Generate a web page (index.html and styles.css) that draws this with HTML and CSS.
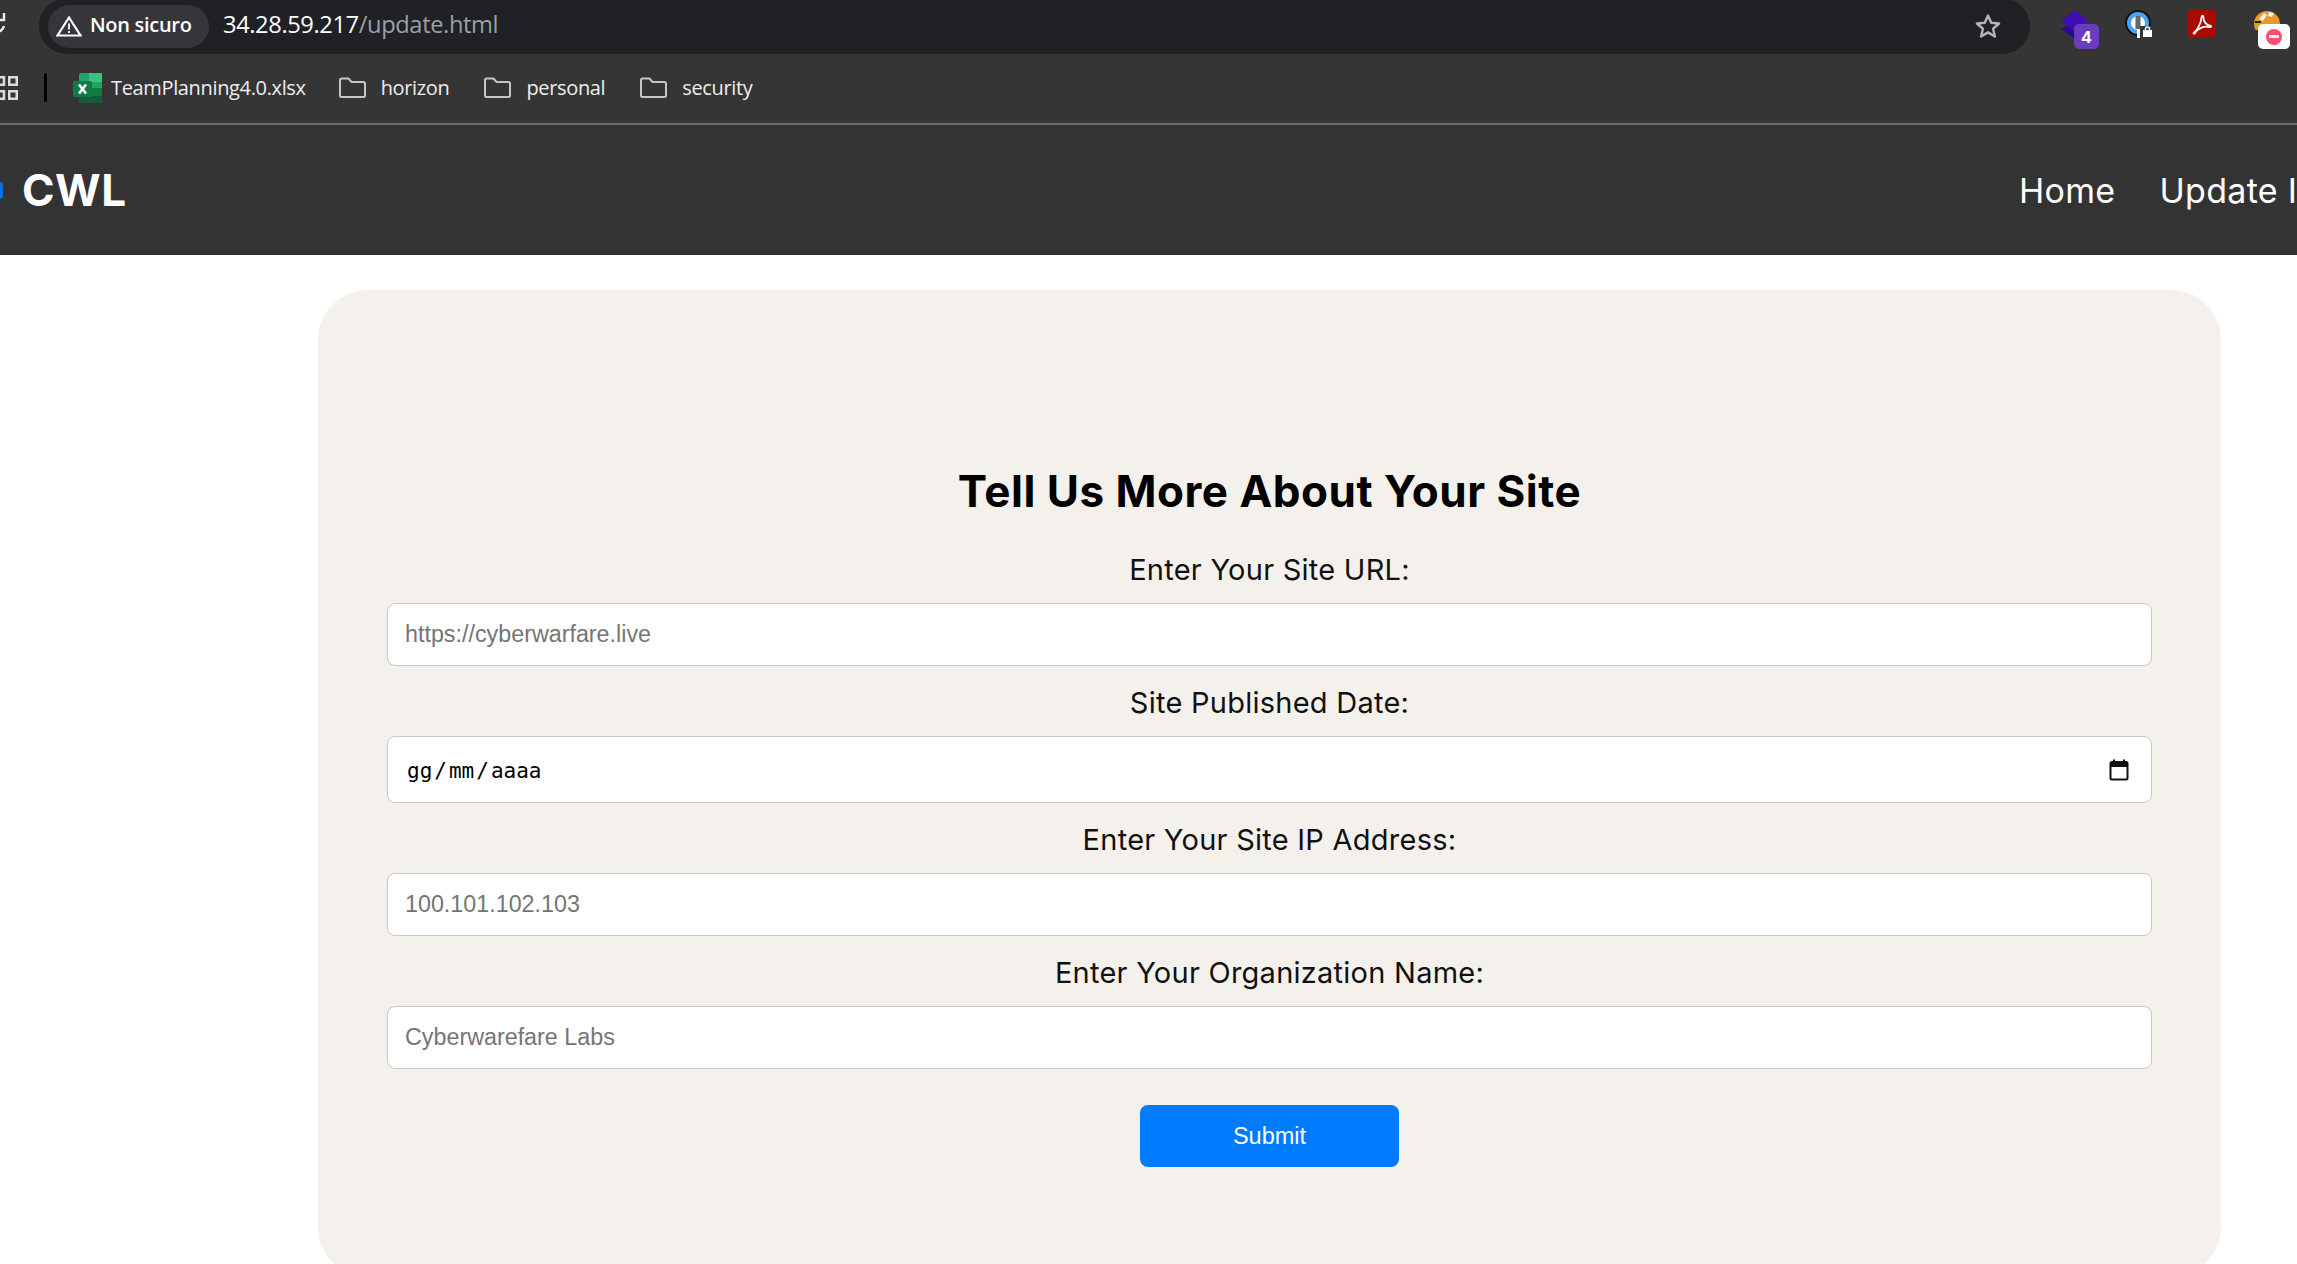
FILE: index.html
```html
<!DOCTYPE html>
<html lang="it">
<head>
    <meta charset="UTF-8">
    <meta name="viewport" content="width=device-width, initial-scale=1.0">
    <title>CWL - Update</title>
    <link rel="stylesheet" href="styles.css">
</head>
<body>
    <div class="toolbar">
        <svg class="reload" width="6" height="22" viewBox="0 0 6 22"><path d="M-3 20a8.500 8.500 0 0 0 7-6" fill="none" stroke="#e8eaed" stroke-width="2.500"/><path d="M4 1v7h-7" fill="none" stroke="#e8eaed" stroke-width="2.500"/></svg>
        <div class="omnibox">
            <div class="chip">
                <svg width="26" height="22" viewBox="0 0 26 22"><path d="M13 2.500 24.500 20.500h-23z" fill="none" stroke="#fff" stroke-width="2.200"/><path d="M13 8.500v6M13 16v2" stroke="#fff" stroke-width="1.800"/></svg>
                <span class="chip-text">Non sicuro</span>
            </div>
            <div class="url">34.28.59.217<span class="url-path">/update.html</span></div>
            <svg class="star" width="28" height="28" viewBox="0 0 28 28"><path d="m14 3.500 3.200 7.300 7.900.7-6 5.200 1.800 7.800-6.900-4.100-6.900 4.100 1.800-7.800-6-5.200 7.900-.7z" fill="none" stroke="#b4b5b8" stroke-width="2.400" stroke-linejoin="round"/></svg>
        </div>
        <div class="extensions">
            <div class="ext ext-stack">
                <svg width="30" height="30" viewBox="0 0 30 30"><path d="M1 19 15 12l14 7-14 10z" fill="#2a0a8c"/><path d="M1 11 15 0l14 11-14 11z" fill="#3f0fb0"/></svg>
                <span class="badge badge-count">4</span>
            </div>
            <div class="ext ext-key">
                <svg width="28" height="28" viewBox="0 0 28 28"><circle cx="13" cy="13" r="13" fill="#111"/><circle cx="13" cy="13" r="9" fill="#fff" stroke="#49a2f5" stroke-width="4"/><rect x="10.500" y="6" width="5" height="13" fill="#666"/><rect x="12" y="19" width="5" height="9" fill="#fff"/><path d="M15 16h13v12H15z" fill="#353535"/><path d="M18 20h9v7h-9z" fill="#fff"/><rect x="20.500" y="17" width="4" height="5" rx="2" fill="none" stroke="#fff" stroke-width="1.500"/></svg>
            </div>
            <div class="ext ext-pdf">
                <svg width="28" height="28" viewBox="0 0 28 28"><rect width="28" height="28" rx="4" fill="#a90a00"/><path d="M6 22.500c3-1.500 7-9 7.500-15 .2-2.500 2-2.500 2 0-.2 4 3 8 7.500 8.500.5 1-1 1.500-2.500 1-4-1-10 .5-13.500 6-1 1-2 .5-1-.5z" fill="none" stroke="#fff" stroke-width="1.800" stroke-linejoin="round"/></svg>
            </div>
            <div class="ext ext-block">
                <svg width="28" height="20" viewBox="0 0 28 20"><circle cx="15" cy="14" r="13" fill="#e9982a"/><path d="M7 9 12 3l3 2-4 6zM17 2l5 1-2 4-4-1z" fill="#f2f2f2"/><path d="M3 11h6v2H3z" fill="#222"/></svg>
                <span class="badge badge-stop"><i></i></span>
            </div>
        </div>
    </div>

    <div class="bookmarks">
        <svg class="apps" width="18" height="24" viewBox="0 0 18 24"><path d="M-4 1.250h8v7.500h-8zM9.250 1.250h7.500v7.500h-7.500zM-4 15.250h8v7.500h-8zM9.250 15.250h7.500v7.500h-7.500z" fill="none" stroke="#dadce0" stroke-width="2.500"/></svg>
        <span class="divider"></span>
        <a class="mark mark-file" href="#">
            <svg width="29" height="30" viewBox="0 0 29 30"><rect x="6" width="23" height="30" rx="2" fill="#21a366"/><rect x="16" width="13" height="9" fill="#33c481"/><rect x="6" y="15" width="23" height="8" fill="#107c41"/><rect x="6" y="23" width="23" height="7" fill="#185c37"/><rect y="8" width="19" height="16" rx="1.500" fill="#107c41"/><path d="m6 11.500 7 9m0-9-7 9" stroke="#fff" stroke-width="2.600"/></svg>
            <span>TeamPlanning4.0.xlsx</span>
        </a>
        <a class="mark" href="#">
            <svg class="folder" width="29" height="22" viewBox="0 0 29 22"><path d="M2 3a1.500 1.500 0 0 1 1.500-1.500h7l3 3.500h12a1.500 1.500 0 0 1 1.500 1.500v12a1.500 1.500 0 0 1-1.500 1.500h-22A1.500 1.500 0 0 1 2 18.500z" fill="none" stroke="#c4c7c5" stroke-width="2"/></svg>
            <span>horizon</span>
        </a>
        <a class="mark" href="#">
            <svg class="folder" width="29" height="22" viewBox="0 0 29 22"><path d="M2 3a1.500 1.500 0 0 1 1.500-1.500h7l3 3.500h12a1.500 1.500 0 0 1 1.500 1.500v12a1.500 1.500 0 0 1-1.500 1.500h-22A1.500 1.500 0 0 1 2 18.500z" fill="none" stroke="#c4c7c5" stroke-width="2"/></svg>
            <span>personal</span>
        </a>
        <a class="mark" href="#">
            <svg class="folder" width="29" height="22" viewBox="0 0 29 22"><path d="M2 3a1.500 1.500 0 0 1 1.500-1.500h7l3 3.500h12a1.500 1.500 0 0 1 1.500 1.500v12a1.500 1.500 0 0 1-1.500 1.500h-22A1.500 1.500 0 0 1 2 18.500z" fill="none" stroke="#c4c7c5" stroke-width="2"/></svg>
            <span>security</span>
        </a>
    </div>

    <header class="navbar">
        <div class="brand">
            <span class="brand-dot"></span>
            <span class="brand-name">CWL</span>
        </div>
        <nav class="nav-links">
            <a href="#">Home</a>
            <a href="#">Update Info</a>
        </nav>
    </header>

    <main class="card">
        <h1>Tell Us More About Your Site</h1>
        <form class="site-form">
            <label for="siteUrl">Enter Your Site URL:</label>
            <input type="text" id="siteUrl" placeholder="https://cyberwarfare.live">

            <label for="siteDate">Site Published Date:</label>
            <div class="date-field" id="siteDate">
                <span class="date-text">gg<i>/</i>mm<i>/</i>aaaa</span>
                <svg width="20" height="22" viewBox="0 0 20 22"><rect x="1.500" y="3" width="17" height="17.500" rx="1.500" fill="none" stroke="#111" stroke-width="2"/><rect x="1.500" y="3" width="17" height="5" fill="#111"/><path d="M5 .5v3M15 .5v3" stroke="#111" stroke-width="2"/></svg>
            </div>

            <label for="siteIp">Enter Your Site IP Address:</label>
            <input type="text" id="siteIp" placeholder="100.101.102.103">

            <label for="siteOrg">Enter Your Organization Name:</label>
            <input type="text" id="siteOrg" placeholder="Cyberwarefare Labs">

            <button type="button">Submit</button>
        </form>
    </main>
</body>
</html>
```

FILE: styles.css
```css
html, body {
    height: 100%;
}
body {
    margin: 0;
    overflow: hidden;
    background-color: #fff;
    font-family: "Inter", sans-serif;
    color: #000;
}

/* barra del browser */
.toolbar {
    display: flex;
    align-items: flex-start;
    height: 54px;
    background-color: #353535;
}
.reload {
    flex: none;
    margin-top: 12px;
}
.omnibox {
    flex: none;
    display: flex;
    align-items: center;
    box-sizing: border-box;
    width: 1991px;
    height: 56px;
    margin: -2px 0 0 33px;
    padding: 0 14px 0 9px;
    background-color: #202124;
    border-radius: 28px;
}
.chip {
    display: flex;
    align-items: center;
    gap: 8px;
    box-sizing: border-box;
    width: 161px;
    height: 43px;
    padding-left: 8px;
    background-color: #35363a;
    border-radius: 22px;
    color: #fff;
    font-family: "Open Sans", sans-serif;
    font-size: 20px;
    font-weight: 600;
    letter-spacing: -0.3px;
}
.chip-text {
    margin-top: -4px;
}
.url {
    margin: -4px 0 0 14px;
    font-family: "Open Sans", sans-serif;
    font-size: 23.700px;
    letter-spacing: -0.4px;
    color: #fff;
}
.url-path {
    color: #9aa0a6;
}
.star {
    margin-left: auto;
    margin-right: 14px;
}
.extensions {
    flex: none;
    display: flex;
    margin-left: 30px;
    padding-top: 10px;
}
.ext {
    position: relative;
    height: 30px;
}
.ext-stack {
    width: 30px;
}
.ext-key {
    width: 28px;
    margin-left: 35px;
}
.ext-pdf {
    width: 28px;
    margin-left: 35px;
}
.ext-block {
    width: 28px;
    margin-left: 36px;
}
.badge {
    position: absolute;
    display: flex;
    align-items: center;
    justify-content: center;
    border-radius: 5px;
}
.badge-count {
    left: 14px;
    top: 14px;
    width: 25px;
    height: 25px;
    background-color: #6a3cc0;
    color: #fff;
    font-size: 16px;
    font-weight: 700;
}
.badge-stop {
    left: 6px;
    top: 14px;
    width: 32px;
    height: 25px;
    background-color: #fff;
}
.badge-stop i {
    width: 16px;
    height: 16px;
    border-radius: 50%;
    background: linear-gradient(#fff, #fff) center / 10px 3px no-repeat #ff4d6d;
}

/* preferiti */
.bookmarks {
    display: flex;
    align-items: center;
    box-sizing: border-box;
    height: 71px;
    padding-bottom: 2px;
    background-color: #353535;
    border-bottom: 2px solid #6a6a6a;
    font-family: "Open Sans", sans-serif;
    font-size: 20px;
    letter-spacing: -0.35px;
    color: #eee;
}
.apps {
    flex: none;
}
.divider {
    width: 3px;
    height: 29px;
    margin: 0 26px 0 26px;
    background-color: #000;
    border-radius: 2px;
}
.mark {
    display: flex;
    align-items: center;
    gap: 14px;
    margin-right: 34px;
    color: inherit;
    text-decoration: none;
}
.mark-file {
    gap: 9px;
    margin-right: 32px;
}

/* navbar del sito */
.navbar {
    display: flex;
    align-items: center;
    justify-content: space-between;
    height: 130px;
    background-color: #333;
    color: #fff;
    overflow: hidden;
}
.brand {
    display: flex;
    align-items: center;
}
.brand-dot {
    width: 3px;
    height: 17px;
    margin-right: 19px;
    background-color: #0a6fd8;
    border-radius: 0 8px 8px 0;
}
.brand-name {
    font-size: 44px;
    font-weight: 700;
    letter-spacing: 0.5px;
}
.nav-links {
    display: flex;
    flex: none;
    gap: 44px;
    width: 278px;
    font-size: 34px;
    font-weight: 400;
    letter-spacing: 0.3px;
}
.nav-links a {
    flex: none;
    color: #fff;
    text-decoration: none;
}

/* form */
.card {
    box-sizing: border-box;
    width: 1903px;
    height: 987px;
    margin: 35px 0 0 318px;
    padding: 173px 69px 0;
    background-color: #f4f1ec;
    border-radius: 50px;
    text-align: center;
}
h1 {
    margin: 0 0 33px;
    font-size: 44px;
    line-height: 56px;
    font-weight: 700;
    letter-spacing: 0.5px;
}
.site-form {
    display: flex;
    flex-direction: column;
}
label {
    margin: 19px 0 16px;
    font-size: 29px;
    line-height: 35px;
    letter-spacing: 0.25px;
    color: #111;
}
label:first-child {
    margin-top: 0;
}
input, .date-field {
    box-sizing: border-box;
    width: 100%;
    height: 63px;
    padding: 0 17px;
    background-color: #fff;
    border: 1px solid #c8c8c8;
    border-radius: 8px;
}
input {
    font-family: "Liberation Sans", sans-serif;
    font-size: 23.300px;
}
input::placeholder {
    color: #757575;
}
.date-field {
    display: flex;
    align-items: center;
    justify-content: space-between;
    height: 67px;
    padding-left: 19px;
    padding-right: 22px;
    font-family: "DejaVu Sans Mono", monospace;
    font-size: 21px;
    color: #000;
    text-align: left;
}
.date-text {
    padding-top: 3px;
}
.date-text i {
    margin: 0 2px;
    font-style: normal;
}
button {
    align-self: center;
    width: 259px;
    height: 62px;
    margin-top: 36px;
    background-color: #007bff;
    border: none;
    border-radius: 8px;
    color: #fff;
    font-family: "Liberation Sans", sans-serif;
    font-size: 23.500px;
    cursor: pointer;
}
```
